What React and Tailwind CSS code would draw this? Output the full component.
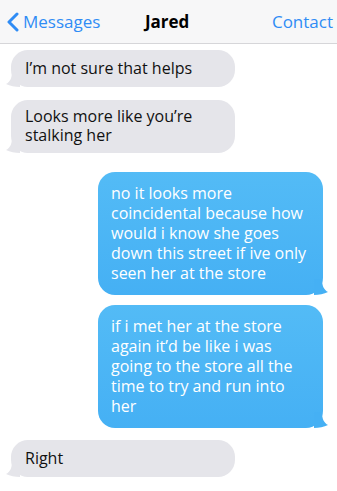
import React from 'react';

const font = { fontFamily: '"Open Sans", "Liberation Sans", sans-serif' };

const Header = () => (
    <div className="h-11 flex items-center justify-between bg-[#f7f7f8] border-b border-[#d6d6d9] px-[6px]">
        <div className="flex items-center text-[#2f8cf5]">
            <svg width="14" height="20" viewBox="0 0 14 20" className="mr-[3px]">
                <path d="M11 2 L3 10 L11 18" fill="none" stroke="#2f8cf5" strokeWidth="3" strokeLinecap="round" strokeLinejoin="round" />
            </svg>
            <span className="text-[17px]">Messages</span>
        </div>
        <span className="text-[17px] font-bold text-black -ml-[38px]">Jared</span>
        <span className="text-[17px] text-[#2f8cf5] mr-[-2px]">Contact</span>
    </div>
);

const Received = ({ children, className = '' }) => (
    <div className={`relative self-start ml-[11px] w-[224px] rounded-[17px] bg-[#e5e5ea] px-[14px] text-[16px] leading-[19px] text-[#111] ${className}`}>
        <svg width="14" height="16" viewBox="0 0 14 16" className="absolute -left-[5px] bottom-0">
            <path d="M14 0 L14 16 C 9 16 4 15 0 13 C 4 11 6 7 6 0 Z" fill="#e5e5ea" />
        </svg>
        <span className="relative">{children}</span>
    </div>
);

const Sent = ({ children, className = '' }) => (
    <div className={`relative self-end mr-[14px] w-[225px] rounded-[17px] bg-gradient-to-b from-[#53bbf6] to-[#45b0f4] px-[13px] py-[10px] text-[16px] leading-[20px] text-white ${className}`}>
        <svg width="14" height="16" viewBox="0 0 14 16" className="absolute -right-[5px] bottom-0">
            <path d="M0 0 L0 16 C 5 16 10 15 14 13 C 10 11 8 7 8 0 Z" fill="#45b0f4" />
        </svg>
        <span className="relative">{children}</span>
    </div>
);

export default function App() {
    return (
        <div className="w-[337px] h-[491px] bg-white overflow-hidden" style={font}>
            <Header />
            <div className="flex flex-col">
                <Received className="mt-[6px] pt-[8px] pb-[9px] leading-[20px]">I’m not sure that helps</Received>
                <Received className="mt-[13px] pt-[7px] pb-[8px]">Looks more like you’re stalking her</Received>
                <Sent className="mt-[19px] pt-[11px] pb-[12px]">no it looks more coincidental because how would i know she goes down this street if ive only seen her at the store</Sent>
                <Sent className="mt-[10px] pt-[11px] pb-[12px]">if i met her at the store again it’d be like i was going to the store all the time to try and run into her</Sent>
                <Received className="mt-[12px] pt-[8px] pb-[9px] leading-[20px]">Right</Received>
            </div>
        </div>
    );
}
